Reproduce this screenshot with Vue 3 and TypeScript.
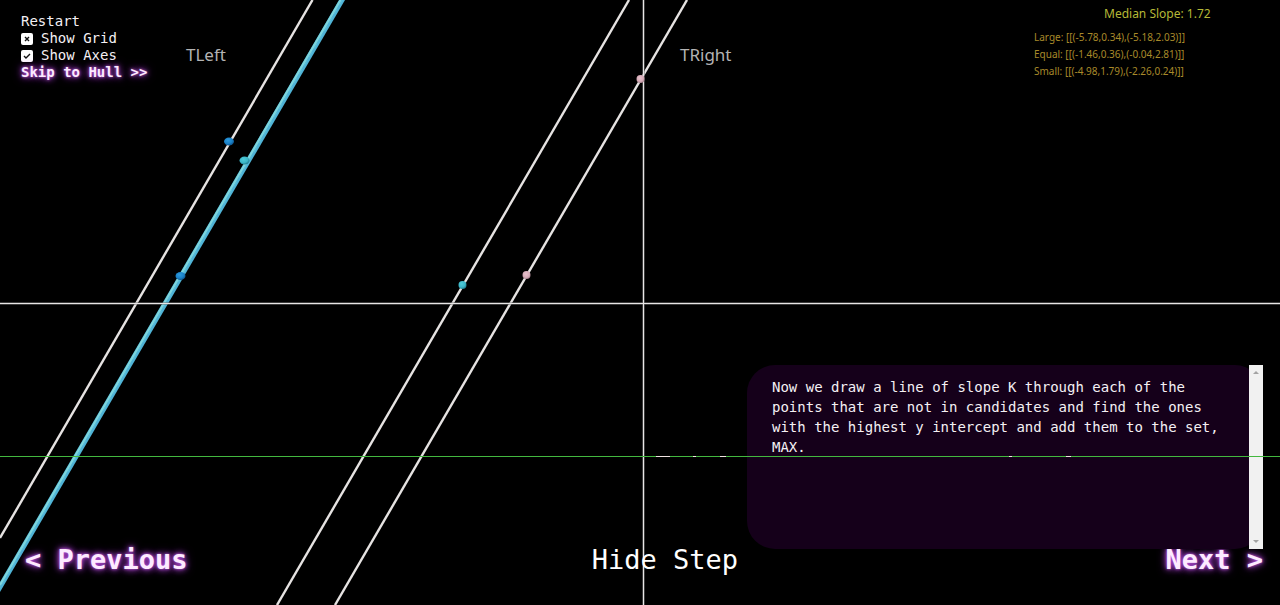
<script setup lang="ts">
import { ref } from 'vue'

interface Point {
  x: number
  y: number
  rx: number
  ry: number
  fill: string
}

const showGrid = ref(false)
const showAxes = ref(true)
const showStep = ref(true)

const slopeLines: string[] = [
  'M312.5 0 L0 538',
  'M629 0 L277 605',
  'M687 0 L335 605',
]

const points: Point[] = [
  { x: 229, y: 141.5, rx: 5, ry: 4, fill: 'url(#blue)' },
  { x: 244.5, y: 160.5, rx: 5, ry: 4, fill: 'url(#teal)' },
  { x: 180.5, y: 276, rx: 5, ry: 4, fill: 'url(#blue)' },
  { x: 462.5, y: 285, rx: 4, ry: 4, fill: 'url(#teal)' },
  { x: 526.5, y: 275, rx: 4, ry: 4, fill: 'url(#pink)' },
  { x: 640.5, y: 79, rx: 4, ry: 4, fill: 'url(#pink)' },
]

const partitions = [
  { name: 'Large', pairs: '[[(-5.78,0.34),(-5.18,2.03)]]' },
  { name: 'Equal', pairs: '[[(-1.46,0.36),(-0.04,2.81)]]' },
  { name: 'Small', pairs: '[[(-4.98,1.79),(-2.26,0.24)]]' },
]

const gridX = Array.from({ length: 13 }, (_, i) => 3 + i * 107)
const gridY = Array.from({ length: 7 }, (_, i) => -17 + i * 107)
</script>

<template>
  <main class="stage">
    <svg class="plane" viewBox="0 0 1280 605" preserveAspectRatio="xMidYMid slice" aria-label="Point plane">
      <defs>
        <radialGradient id="blue" cx="40%" cy="35%" r="70%">
          <stop offset="0" stop-color="#2c9ade" />
          <stop offset="0.6" stop-color="#1a80c6" />
          <stop offset="1" stop-color="#0b4a80" />
        </radialGradient>
        <radialGradient id="teal" cx="40%" cy="35%" r="70%">
          <stop offset="0" stop-color="#4fcbd8" />
          <stop offset="0.6" stop-color="#3cb6c8" />
          <stop offset="1" stop-color="#1d7486" />
        </radialGradient>
        <radialGradient id="pink" cx="45%" cy="38%" r="70%">
          <stop offset="0" stop-color="#e8c2cd" />
          <stop offset="0.6" stop-color="#d5aab7" />
          <stop offset="1" stop-color="#92707b" />
        </radialGradient>
      </defs>
      <g v-if="showGrid" class="grid">
        <path v-for="x in gridX" :key="'x' + x" :d="`M${x} 0 V605`" />
        <path v-for="y in gridY" :key="'y' + y" :d="`M0 ${y} H1280`" />
      </g>
      <path v-for="d in slopeLines" :key="d" class="slope" :d="d" />
      <path class="support" d="M339 0 L345 0 L0 592 L0 582 Z" />
      <path class="support-light" d="M340.5 0 L0 585" />
      <path class="support-dash" d="M342.5 0 L0 588" />
      <g v-if="showAxes" class="axes">
        <path class="axis-edge" d="M0 303.5 H1280 M643.5 0 V605" />
        <path d="M0 303.5 H1280 M643.5 0 V605" />
      </g>
      <ellipse
        v-for="p in points"
        :key="p.x"
        :cx="p.x"
        :cy="p.y"
        :rx="p.rx"
        :ry="p.ry"
        :fill="p.fill"
      />
      <text class="side" x="186" y="61">TLeft</text>
      <text class="side" x="680" y="61">TRight</text>
      <text class="median" x="1104" y="18">Median Slope: 1.72</text>
      <text
        v-for="(part, i) in partitions"
        :key="part.name"
        class="partition"
        x="1034"
        :y="41 + i * 17"
      >{{ part.name }}: {{ part.pairs }}</text>
    </svg>

    <nav class="menu">
      <button type="button">Restart</button>
      <label class="toggle">
        <span class="box">
          <input v-model="showGrid" type="checkbox" />
          <svg viewBox="0 0 12 12" aria-hidden="true">
            <path v-if="showGrid" d="M3 6 L5 8 L9 4" />
            <path v-else d="M4 4 L8 8 M8 4 L4 8" />
          </svg>
        </span>
        Show Grid
      </label>
      <label class="toggle">
        <span class="box">
          <input v-model="showAxes" type="checkbox" />
          <svg viewBox="0 0 12 12" aria-hidden="true">
            <path v-if="showAxes" d="M3 6 L5 8 L9 4" />
            <path v-else d="M4 4 L8 8 M8 4 L4 8" />
          </svg>
        </span>
        Show Axes
      </label>
      <button type="button" class="glow">Skip to Hull &gt;&gt;</button>
    </nav>

    <div class="bottom">
      <section v-if="showStep" class="step">
        <p>
          Now we draw a line of slope K through each of the points that are not in
          candidates and find the ones with the highest y intercept and add them to
          the set, MAX.
        </p>
        <div class="scrollbar" aria-hidden="true">
          <svg viewBox="0 0 14 14"><path d="M4 9 L7 6 L10 9 Z" /></svg>
          <svg viewBox="0 0 14 14"><path d="M4 5 L7 8 L10 5 Z" /></svg>
        </div>
      </section>
      <footer class="controls">
        <button type="button" class="glow">&lt; Previous</button>
        <button type="button" class="hide" @click="showStep = !showStep">
          {{ showStep ? 'Hide Step' : 'Show Step' }}
        </button>
        <button type="button" class="glow next">Next &gt;</button>
      </footer>
    </div>

    <svg class="scan" viewBox="0 0 1280 605" preserveAspectRatio="xMidYMid slice" aria-hidden="true">
      <path class="scan-line" d="M0 456.5 H1280" />
      <path class="scan-gap" d="M656 456.5 H670 M693 456.5 H696 M720 456.5 H726 M1009 456.5 H1012 M1066 456.5 H1071" />
    </svg>
  </main>
</template>

<style>
body {
  margin: 0;
  background: #000;
}
</style>

<style scoped>
.stage {
  position: relative;
  display: flex;
  flex-direction: column;
  justify-content: space-between;
  min-height: 100vh;
  box-sizing: border-box;
  overflow: hidden;
  background: #000;
  color: #f4f0f4;
  font: 14px/17px "DejaVu Sans Mono", "Liberation Mono", monospace;
}

.plane,
.scan {
  position: absolute;
  inset: 0;
  width: 100%;
  height: 100%;
}

.scan {
  z-index: 3;
  pointer-events: none;
}

.plane path {
  fill: none;
}

.grid path {
  stroke: #333;
}

.slope {
  stroke: #e6e3e2;
  stroke-width: 2.4;
}

.plane .support {
  fill: #4fb3d6;
}

.support-light {
  stroke: #7fd6dc;
  stroke-width: 2;
}

.support-dash {
  stroke: #5cc0dc;
  stroke-width: 1;
  stroke-dasharray: 6 4;
}

.axes path {
  stroke: #e8e6e6;
  stroke-width: 1;
}

.axes .axis-edge {
  stroke: #777;
  stroke-width: 2;
}

.side,
.median,
.partition {
  font-family: "Noto Sans", sans-serif;
}

.side {
  font-size: 17px;
  fill: #b4b4b4;
}

.median {
  font-size: 12px;
  fill: #b5b837;
}

.partition {
  font-size: 10px;
  fill: #a88a2a;
}

.scan path {
  fill: none;
  stroke-width: 1;
}

.scan-line {
  stroke: #43b83f;
}

.scan-gap {
  stroke: #efe3e0;
}

button {
  padding: 0;
  border: 0;
  background: none;
  color: inherit;
  font: inherit;
  cursor: pointer;
}

.menu {
  position: relative;
  display: flex;
  flex-direction: column;
  align-items: flex-start;
  align-self: flex-start;
  padding: 13px 21px;
}

.toggle {
  display: flex;
  align-items: center;
  gap: 8px;
}

.box {
  display: grid;
  width: 12px;
  height: 12px;
}

.box input,
.box svg {
  grid-area: 1 / 1;
  width: 12px;
  height: 12px;
  margin: 0;
}

.box input {
  appearance: none;
  border-radius: 2px;
  background: #fff;
}

.box svg {
  pointer-events: none;
}

.box path {
  fill: none;
  stroke: #111;
  stroke-width: 1.4;
}

.glow {
  color: #fdeaff;
  font-weight: 700;
  text-shadow: 0 0 3px #c05be0, 0 0 6px #a23cc8, 0 0 10px #8a30b0;
}

.bottom {
  position: relative;
  display: flex;
  flex-direction: column;
}

.step {
  position: relative;
  z-index: 2;
  display: flex;
  align-self: flex-end;
  justify-content: space-between;
  width: 516px;
  max-width: 100%;
  min-height: 184px;
  margin-right: 17px;
  border-radius: 28px;
  background: #15001a;
}

.step p {
  flex: 1;
  margin: 0;
  padding: 12px 25px;
  line-height: 20px;
}

.scrollbar {
  display: flex;
  flex-direction: column;
  justify-content: space-between;
  width: 14px;
  background: #f1f1f1;
}

.scrollbar svg {
  width: 14px;
  height: 14px;
}

.scrollbar path {
  fill: #a3a3a3;
}

.controls {
  display: grid;
  grid-template-columns: 27fr auto 25fr;
  align-items: start;
  height: 56px;
  padding: 0 17px 0 25px;
  font-size: 27px;
}

.controls button {
  justify-self: start;
  line-height: 22px;
}

.controls .hide {
  color: #fff;
}

.controls .next {
  justify-self: end;
}
</style>
